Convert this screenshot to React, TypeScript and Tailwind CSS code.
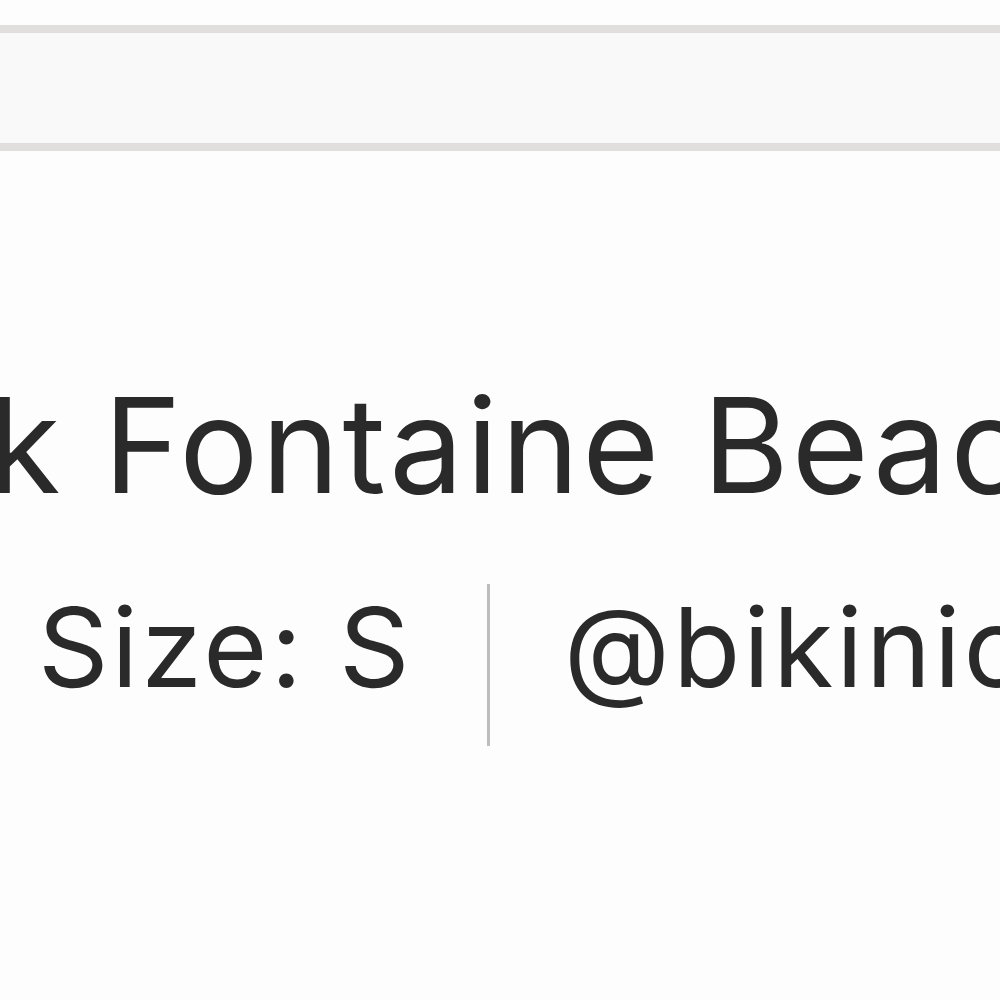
export default function App() {
  return (
    <div className="w-[1000px] h-[1000px] overflow-hidden bg-[#fdfdfd] text-[#2a2a2a] font-['Inter',sans-serif]">
      <div className="mt-[25px] h-[126px] border-y-[8px] border-[#e1dfde] bg-[#f9f9f9]" />

      <div className="mt-[214px] whitespace-nowrap ml-[-12px] text-[132px] leading-[160px] tracking-[3px]">
        k Fontaine Beach
      </div>

      <div className="mt-[42px] flex items-start whitespace-nowrap ml-[38px] text-[110px] leading-[160px] tracking-[3px]">
        <span>Size: S</span>
        <span className="block shrink-0 mt-[17px] ml-[74px] mr-[74px] w-[3px] h-[162px] bg-[#bdbdbd]" />
        <span>@bikinicompany</span>
      </div>
    </div>
  );
}
